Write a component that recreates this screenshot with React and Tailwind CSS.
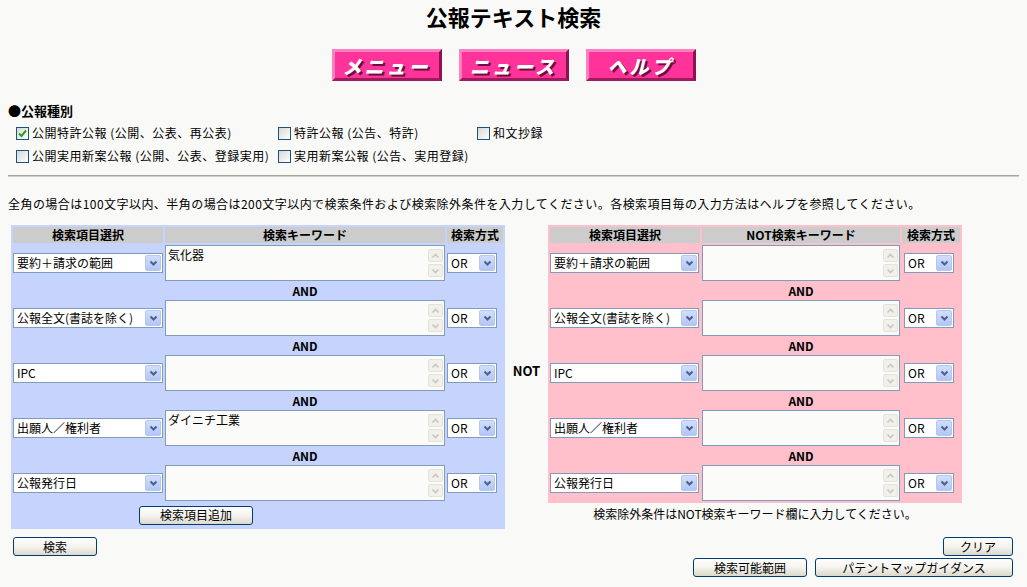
import React from "react";

const F = "font-['Noto_Sans_CJK_JP',sans-serif]";

function SelChev() {
  return (
    <svg width="9" height="7" viewBox="0 0 9 7">
      <path d="M1.5 1.5 L4.5 4.5 L7.5 1.5" fill="none" stroke="#4d6185" strokeWidth="2" />
    </svg>
  );
}

function Sel({ text, w }) {
  return (
    <div className={`flex items-center h-[20px] border border-[#7f9db9] bg-white ${w}`}>
      <span className="flex-1 pl-[3px] text-[12px] leading-[18px] whitespace-nowrap overflow-hidden text-black">{text}</span>
      <span className="w-[16px] h-[16px] mr-[1px] rounded-[2px] bg-gradient-to-b from-[#d2defe] to-[#b2c6f5] border border-[#b6c7ee] flex items-center justify-center">
        <SelChev />
      </span>
    </div>
  );
}

function ScrollBtn({ up }) {
  return (
    <div className="flex-1 m-[1px] rounded-[2px] bg-[#f1f0ea] border border-[#e4e3db] flex items-center justify-center">
      <svg width="9" height="6" viewBox="0 0 9 6">
        <path d={up ? "M1.5 4.5 L4.5 1.5 L7.5 4.5" : "M1.5 1.5 L4.5 4.5 L7.5 1.5"} fill="none" stroke="#c8c7bf" strokeWidth="1.6" />
      </svg>
    </div>
  );
}

function TextBox({ text }) {
  return (
    <div className="flex h-[36px] border border-[#7f9db9] bg-[#fbfbf9]">
      <div className="flex-1 px-[2px] pt-[1px] text-[12px] leading-[16px] text-black">{text}</div>
      <div className="w-[17px] flex flex-col py-[2px]">
        <ScrollBtn up />
        <ScrollBtn />
      </div>
    </div>
  );
}

function XPButton({ children, w }) {
  return (
    <div className={`h-[19px] ${w} border border-[#003c74] rounded-[3px] bg-gradient-to-b from-white via-[#f4f3ee] to-[#dcd9cb] flex items-center justify-center text-[12px] leading-none text-black`}>
      {children}
    </div>
  );
}

function PinkBtn({ children }) {
  return (
    <div className="w-[110px] h-[32px] bg-[#ff3399] border-[3px] border-t-[#ff80c0] border-l-[#ff80c0] border-b-[#a01a5c] border-r-[#8a1350] flex items-center justify-center">
      <span className="text-white italic font-black text-[19px] leading-none tracking-[3px] [text-shadow:2px_2px_0_#6e0d3d]">{children}</span>
    </div>
  );
}

function Check({ checked, label }) {
  return (
    <div className="flex items-center gap-[3px] whitespace-nowrap">
      <span className="w-[13px] h-[13px] border border-[#1c5180] bg-gradient-to-br from-[#d8d8d2] to-white flex items-center justify-center">
        {checked && (
          <svg width="9" height="9" viewBox="0 0 9 9">
            <path d="M1 4.5 L3.5 7 L8 1.5" fill="none" stroke="#21a121" strokeWidth="2" />
          </svg>
        )}
      </span>
      <span className="text-[12px] leading-[16px] tracking-[0.5px]">{label}</span>
    </div>
  );
}

const blueRows = [
  { sel: "要約＋請求の範囲", kw: "気化器" },
  { sel: "公報全文(書誌を除く)", kw: "" },
  { sel: "IPC", kw: "" },
  { sel: "出願人／権利者", kw: "ダイニチ工業" },
  { sel: "公報発行日", kw: "" },
];

function Panel({ bg, cols, kwHeader, rows, selW, orCls, footer }) {
  return (
    <div className={`${bg} p-[2px] flex flex-col gap-[2px]`}>
      <div className={`grid ${cols} gap-[2px] h-[16px]`}>
        <div className="bg-[#cccccc] text-center font-bold text-[12px] leading-[16px]">検索項目選択</div>
        <div className="bg-[#cccccc] text-center font-bold text-[12px] leading-[16px]">{kwHeader}</div>
        <div className="bg-[#cccccc] text-center font-bold text-[12px] leading-[16px]">検索方式</div>
      </div>
      {rows.map((r, i) => (
        <React.Fragment key={i}>
          <div className={`grid ${cols} gap-[2px] items-center`}>
            <Sel text={r.sel} w={selW} />
            <TextBox text={r.kw} />
            <div className={orCls}>
              <Sel text="OR" w="w-[50px]" />
            </div>
          </div>
          {i < rows.length - 1 && (
            <div className={`grid ${cols} gap-[2px] h-[15px]`}>
              <div />
              <div className="text-center font-bold text-[12px] leading-[15px]">AND</div>
              <div />
            </div>
          )}
        </React.Fragment>
      ))}
      {footer}
    </div>
  );
}

export default function App() {
  return (
    <div className={`${F} bg-[#f9f9f7] text-black min-h-[587px] w-[1027px] px-[8px]`}>
      <div className="pt-[3px] text-center text-[22px] font-bold leading-[26px]">公報テキスト検索</div>
      <div className="mt-[20px] flex justify-center gap-[17px]">
        <PinkBtn>メニュー</PinkBtn>
        <PinkBtn>ニュース</PinkBtn>
        <PinkBtn>ヘルプ</PinkBtn>
      </div>
      <div className="mt-[22px] text-[13px] font-bold leading-[16px]">●公報種別</div>
      <div className="mt-[4px] ml-[8px] grid grid-cols-[262px_199px_1fr] gap-y-[3px]">
        <div className="h-[20px] flex items-center"><Check checked label="公開特許公報 (公開、公表、再公表)" /></div>
        <div className="h-[20px] flex items-center"><Check label="特許公報 (公告、特許)" /></div>
        <div className="h-[20px] flex items-center"><Check label="和文抄録" /></div>
        <div className="h-[20px] flex items-center"><Check label="公開実用新案公報 (公開、公表、登録実用)" /></div>
        <div className="h-[20px] flex items-center"><Check label="実用新案公報 (公告、実用登録)" /></div>
        <div />
      </div>
      <div className="mt-[9px] h-[2px] border-t border-[#a5a59e] bg-[#d0d0ca]" />
      <div className="mt-[19px] text-[12px] leading-[16px] whitespace-nowrap tracking-[0.45px]">
        全角の場合は100文字以内、半角の場合は200文字以内で検索条件および検索除外条件を入力してください。各検索項目毎の入力方法はヘルプを参照してください。
      </div>
      <div className="mt-[13px] ml-[3px] flex items-start">
        <div className="w-[494px]">
          <Panel
            bg="bg-[#c6d3fc]"
            cols="grid-cols-[150px_280px_56px]"
            kwHeader="検索キーワード"
            rows={blueRows}
            selW="w-[150px]"
            orCls=""
            footer={
              <div className="h-[24px] flex items-center pl-[126px]">
                <XPButton w="w-[114px]">検索項目追加</XPButton>
              </div>
            }
          />
        </div>
        <div className="w-[43px] self-stretch flex items-center justify-center pb-[12px] text-[13px] font-bold leading-[16px]">NOT</div>
        <div className="w-[414px] flex flex-col">
          <Panel
            bg="bg-[#ffc0cb]"
            cols="grid-cols-[150px_198px_58px]"
            kwHeader="NOT検索キーワード"
            rows={blueRows.map((r) => ({ sel: r.sel, kw: "" }))}
            selW="w-[149px]"
            orCls="pl-[2px]"
            footer={null}
          />
          <div className="mt-[3px] text-center text-[12px] leading-[16px]">検索除外条件はNOT検索キーワード欄に入力してください。</div>
        </div>
      </div>
      <div className="mt-[8px] ml-[5px] mr-[6px] flex justify-between">
        <XPButton w="w-[84px]">検索</XPButton>
        <XPButton w="w-[70px]">クリア</XPButton>
      </div>
      <div className="mt-[2px] mr-[6px] flex justify-end gap-[8px]">
        <XPButton w="w-[114px]">検索可能範囲</XPButton>
        <XPButton w="w-[198px]">パテントマップガイダンス</XPButton>
      </div>
    </div>
  );
}
